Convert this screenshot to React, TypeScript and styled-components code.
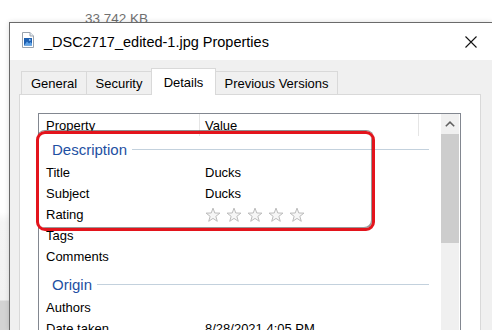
import React from "react";
import styled, { createGlobalStyle } from "styled-components";

const GlobalStyle = createGlobalStyle`
  html, body { margin: 0; padding: 0; background: #fff; }
  body { font-family: "Liberation Sans", Arial, sans-serif; }
  #root { width: 492px; height: 330px; }
  * { box-sizing: border-box; }
`;

const Screen = styled.div`
  position: relative;
  width: 492px;
  height: 330px;
  overflow: hidden;
  background: #fff;
  display: flex;
  flex-direction: column;
`;

const BehindStrip = styled.div`
  height: 22px;
  flex: none;
  overflow: hidden;
  padding: 11.5px 0 0 85px;
  font-size: 13.5px;
  line-height: 13.5px;
  color: #707070;
`;

const Desk = styled.div`
  display: flex;
  flex: 1;
  min-height: 0;
`;

const Gutter = styled.div`
  width: 9px;
  flex: none;
  background: linear-gradient(to bottom, #fff 0, #fff 190px, #f4f4f4 200px, #f2f2f2 278px, #d3d3d3 279px);
`;

const Window = styled.div`
  flex: 1;
  min-width: 0;
  display: flex;
  flex-direction: column;
  border-top: 1px solid #6a6a6a;
  border-left: 1px solid #6a6a6a;
  background: #f0f0f0;
  box-shadow: 0 0 5px rgba(0, 0, 0, 0.14);
`;

const TitleBar = styled.div`
  height: 37px;
  flex: none;
  background: #fff;
  display: flex;
  align-items: center;
  padding: 0 15px 0 12px;
`;

const FileIcon = styled.svg`
  width: 12px;
  height: 16px;
  flex: none;
  margin-bottom: 4px;
`;

const TitleText = styled.div`
  margin-left: 10px;
  flex: 1;
  font-size: 14.5px;
  color: #000;
  white-space: nowrap;
`;

const CloseIcon = styled.svg`
  width: 12px;
  height: 12px;
  flex: none;
`;

const Body = styled.div`
  flex: 1;
  display: flex;
  flex-direction: column;
  padding: 8px 11px 0 9px;
  min-height: 0;
`;

const TabStrip = styled.div`
  height: 26px;
  flex: none;
  display: flex;
  align-items: flex-end;
  padding-left: 2px;
  position: relative;
  z-index: 1;
`;

const Tab = styled.div<{ $w: number; $active?: boolean }>`
  width: ${(p) => p.$w}px;
  height: ${(p) => (p.$active ? 27 : 23)}px;
  margin-bottom: ${(p) => (p.$active ? -1 : 0)}px;
  margin-left: -1px;
  &:first-child { margin-left: 0; }
  border: 1px solid #d9d9d9;
  border-bottom: none;
  background: ${(p) => (p.$active ? "#fff" : "#f0f0f0")};
  display: flex;
  align-items: center;
  justify-content: center;
  font-size: 13px;
  color: #000;
  white-space: nowrap;
`;

const Page = styled.div`
  flex: 1;
  display: flex;
  flex-direction: column;
  background: #fff;
  border: 1px solid #d9d9d9;
  border-bottom: none;
  padding: 18px 19px 0 18px;
  min-height: 0;
`;

const ListBox = styled.div`
  flex: 1;
  display: flex;
  border: 1px solid #828790;
  border-bottom: none;
  min-height: 0;
`;

const ListContent = styled.div`
  flex: 1;
  display: flex;
  flex-direction: column;
  min-width: 0;
`;

const HeaderRow = styled.div`
  height: 22px;
  flex: none;
  display: grid;
  grid-template-columns: 161px 219px 1fr;
`;

const HeaderCell = styled.div<{ $pad: number; $divider?: boolean }>`
  display: flex;
  align-items: center;
  padding-left: ${(p) => p.$pad}px;
  border-right: ${(p) => (p.$divider ? "1px solid #e5e5e5" : "none")};
  font-size: 13px;
  color: #000;
`;

const GroupRow = styled.div<{ $first?: boolean }>`
  height: 26px;
  flex: none;
  margin-top: ${(p) => (p.$first ? 0 : 4)}px;
  display: flex;
  align-items: center;
  padding: 0 12px 0 13px;
`;

const GroupLabel = styled.span`
  font-size: 15px;
  color: #1e50a2;
`;

const GroupRule = styled.div`
  flex: 1;
  height: 1px;
  margin-left: 5px;
  background: #c3d1dd;
`;

const Row = styled.div`
  height: 21px;
  flex: none;
  display: grid;
  grid-template-columns: 161px 219px 1fr;
  align-items: center;
  font-size: 13px;
  color: #000;
`;

const Cell = styled.div<{ $pad: number }>`
  padding-left: ${(p) => p.$pad}px;
  white-space: nowrap;
  display: flex;
  align-items: center;
`;

const Stars = styled.div`
  display: flex;
  gap: 5px;
`;

const Star = styled.svg`
  width: 16px;
  height: 16px;
  flex: none;
`;

const Scrollbar = styled.div`
  width: 18px;
  flex: none;
  margin-right: 1px;
  display: flex;
  flex-direction: column;
  background: #f0f0f0;
`;

const ScrollButton = styled.div`
  height: 20px;
  flex: none;
  display: flex;
  align-items: center;
  justify-content: center;
`;

const ScrollThumb = styled.div`
  height: 109px;
  flex: none;
  background: #cdcdcd;
`;

const Annotation = styled.div`
  position: absolute;
  left: 36px;
  top: 131px;
  width: 339px;
  height: 100px;
  border: 3px solid #e3141c;
  border-radius: 9px;
  box-shadow: 0 -2px 0 -1px rgba(70, 70, 70, 0.6), inset -2px -2px 0 -1px rgba(70, 70, 70, 0.55);
  pointer-events: none;
`;

const STAR_POINTS =
  "8,1.1 9.76,5.97 14.94,6.14 10.85,9.33 12.29,14.31 8,11.4 3.71,14.31 5.15,9.33 1.06,6.14 6.24,5.97";

const tabs = [
  { label: "General", w: 66 },
  { label: "Security", w: 66 },
  { label: "Details", w: 65, active: true },
  { label: "Previous Versions", w: 123 },
];

type Item =
  | { kind: "group"; label: string }
  | { kind: "row"; name: string; value?: string; stars?: boolean };

const items: Item[] = [
  { kind: "group", label: "Description" },
  { kind: "row", name: "Title", value: "Ducks" },
  { kind: "row", name: "Subject", value: "Ducks" },
  { kind: "row", name: "Rating", stars: true },
  { kind: "row", name: "Tags" },
  { kind: "row", name: "Comments" },
  { kind: "group", label: "Origin" },
  { kind: "row", name: "Authors" },
  { kind: "row", name: "Date taken", value: "8/28/2021 4:05 PM" },
];

export default function App() {
  return (
    <>
      <GlobalStyle />
      <Screen>
        <BehindStrip>33 742 KB</BehindStrip>
        <Desk>
          <Gutter />
          <Window>
            <TitleBar>
              <FileIcon viewBox="0 0 12 16">
                <path d="M0.5 0.5 H8 L11.5 4 V15.5 H0.5 Z" fill="#fff" stroke="#9aa3ad" />
                <path d="M8 0.5 V4 H11.5" fill="#e8eef4" stroke="#9aa3ad" />
                <rect x="2" y="6" width="8" height="7.5" fill="#1d5fb0" />
                <path d="M2 13.5 L5 9.5 L7 11.5 L8.5 10 L10 11.5 V13.5 Z" fill="#5fa3e6" />
                <circle cx="7.8" cy="7.9" r="0.9" fill="#9fd0ff" />
              </FileIcon>
              <TitleText>_DSC2717_edited-1.jpg Properties</TitleText>
              <CloseIcon viewBox="0 0 12 12">
                <path d="M0.5 0.5 L11.5 11.5 M11.5 0.5 L0.5 11.5" stroke="#111" strokeWidth="1.1" />
              </CloseIcon>
            </TitleBar>
            <Body>
              <TabStrip>
                {tabs.map((t) => (
                  <Tab key={t.label} $w={t.w} $active={t.active}>
                    {t.label}
                  </Tab>
                ))}
              </TabStrip>
              <Page>
                <ListBox>
                  <ListContent>
                    <HeaderRow>
                      <HeaderCell $pad={7} $divider>Property</HeaderCell>
                      <HeaderCell $pad={5} $divider>Value</HeaderCell>
                      <HeaderCell $pad={0} />
                    </HeaderRow>
                    {items.map((it, i) =>
                      it.kind === "group" ? (
                        <GroupRow key={i} $first={i === 0}>
                          <GroupLabel>{it.label}</GroupLabel>
                          <GroupRule />
                        </GroupRow>
                      ) : (
                        <Row key={i}>
                          <Cell $pad={7}>{it.name}</Cell>
                          <Cell $pad={5}>
                            {it.stars ? (
                              <Stars>
                                {[0, 1, 2, 3, 4].map((s) => (
                                  <Star key={s} viewBox="0 0 16 16">
                                    <polygon
                                      points={STAR_POINTS}
                                      fill="#f6f6f6"
                                      stroke="#bcbcbc"
                                      strokeWidth="1"
                                      strokeLinejoin="round"
                                    />
                                  </Star>
                                ))}
                              </Stars>
                            ) : (
                              it.value
                            )}
                          </Cell>
                          <Cell $pad={0} />
                        </Row>
                      )
                    )}
                  </ListContent>
                  <Scrollbar>
                    <ScrollButton>
                      <svg width="10" height="6" viewBox="0 0 10 6">
                        <polyline points="0.8,5.3 5,1.1 9.2,5.3" fill="none" stroke="#606060" strokeWidth="1.5" />
                      </svg>
                    </ScrollButton>
                    <ScrollThumb />
                  </Scrollbar>
                </ListBox>
              </Page>
            </Body>
          </Window>
        </Desk>
        <Annotation />
      </Screen>
    </>
  );
}
